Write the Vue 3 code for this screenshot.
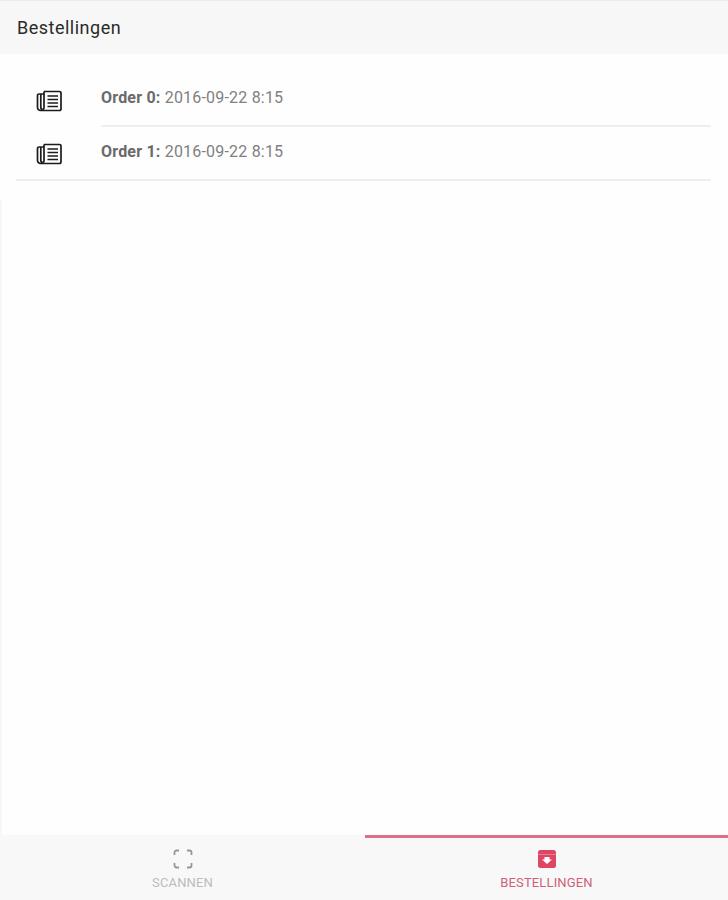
<script setup>
const orders = [
  { name: 'Order 0:', date: '2016-09-22 8:15' },
  { name: 'Order 1:', date: '2016-09-22 8:15' }
]
</script>

<template>
  <div class="app">
    <header class="header">Bestellingen</header>
    <main class="content">
      <ul class="list">
        <li v-for="o in orders" :key="o.name" class="item">
          <span class="icon-cell">
            <svg width="26" height="22" viewBox="0 0 26 22" fill="none" stroke="#1c1c1c" stroke-width="1.700">
              <path d="M8 1.500H23.500a1.500 1.500 0 0 1 1.500 1.500V19a1.500 1.500 0 0 1-1.500 1.500H4.500a3 3 0 0 1-3-3V5.500a1.500 1.500 0 0 1 1.500-1.500H8" />
              <path d="M4.800 4V17.500a2 2 0 0 0 2 2" />
              <path d="M8 1.500V18a2 2 0 0 1-1.200 1.500" />
              <path d="M11.500 6H22M11.500 9.500H22M11.500 13H22M11.500 16.500H22" stroke-width="1.500" />
            </svg>
          </span>
          <div class="text">
            <b>{{ o.name }}</b> {{ o.date }}
          </div>
        </li>
      </ul>
    </main>
    <nav class="tabs">
      <div class="tab">
        <svg width="20" height="20" viewBox="0 0 20 20" fill="none" stroke="#969696" stroke-width="1.800">
          <path d="M1.500 6V3.500a2 2 0 0 1 2-2H6M14 1.500h2.500a2 2 0 0 1 2 2V6M18.500 14v2.500a2 2 0 0 1-2 2H14M6 18.500H3.500a2 2 0 0 1-2-2V14" />
        </svg>
        <span>SCANNEN</span>
      </div>
      <div class="tab active">
        <svg width="20" height="20" viewBox="0 0 20 20">
          <rect x="1" y="1" width="18" height="18" rx="2.500" fill="#de4764" />
          <path d="M1 5.500H19" stroke="#f08aa0" stroke-width="0.800" />
          <path d="M7.500 8H12.500V10.500H15L10 15L5 10.500H7.500Z" fill="#fff" />
        </svg>
        <span>BESTELLINGEN</span>
      </div>
    </nav>
  </div>
</template>

<style scoped>
.app {
  width: 728px;
  height: 900px;
  display: flex;
  flex-direction: column;
  background: #fefefe;
  font-family: Roboto, "Liberation Sans", sans-serif;
  overflow: hidden;
}
.header {
  height: 54px;
  padding: 0 0 0 17px;
  display: flex;
  align-items: center;
  background: #f7f7f7;
  border-top: 1px solid #ebebeb;
  font-size: 18px;
  letter-spacing: 0.500px;
  color: #2a2a2a;
  box-sizing: border-box;
}
.content {
  flex: 1;
  background: linear-gradient(#f7f7f7, #f7f7f7) no-repeat 0 146px / 2px 100%;
}
.list {
  list-style: none;
  margin: 0;
  padding: 18px 17px 0 16px;
}
.item {
  display: flex;
  height: 54px;
  box-sizing: border-box;
}
.item:first-child {
  height: 55px;
}
.item:first-child .icon-cell {
  padding-top: 18px;
}
.item:first-child .text {
  padding-top: 16px;
}
.icon-cell {
  width: 85px;
  flex: none;
  display: flex;
  align-items: flex-start;
  padding: 16px 0 0 20px;
  box-sizing: border-box;
}
.text {
  flex: 1;
  padding-top: 15px;
  font-size: 16px;
  letter-spacing: 0.200px;
  line-height: 19px;
  color: #808080;
  border-bottom: 2px solid #eeeeee;
  box-sizing: border-box;
}
.item:last-child {
  border-bottom: 2px solid #eeeeee;
}
.item:last-child .text {
  border-bottom: 0;
}
.text b {
  font-weight: 700;
  color: #6a6a6a;
}
.tabs {
  height: 65px;
  display: flex;
  background: #f8f8f8;
}
.tab {
  flex: 1;
  box-sizing: border-box;
  border-top: 3px solid transparent;
  padding-top: 11px;
  display: flex;
  flex-direction: column;
  align-items: center;
  gap: 7px;
  font-size: 13px;
  letter-spacing: 0.150px;
  line-height: 14px;
  color: #bcbcbc;
}
.tab:first-child {
  flex: none;
  width: 365px;
}
.tab.active {
  border-top-color: #dc7087;
  color: #cf5f7a;
}
</style>
